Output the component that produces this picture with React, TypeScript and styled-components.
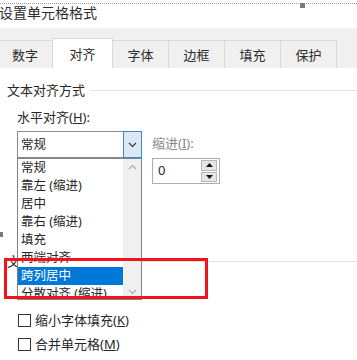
import React from 'react';
import styled, { createGlobalStyle } from 'styled-components';

const GlobalStyle = createGlobalStyle`
  html, body {
    margin: 0;
    padding: 0;
    background: #ffffff;
  }
  body {
    font-family: 'Noto Sans', 'Noto Sans CJK SC', sans-serif;
    color: #262626;
  }
  * {
    box-sizing: border-box;
  }
`;

const Page = styled.div`
  position: relative;
  width: 357px;
  height: 360px;
  overflow: hidden;
  background: #ffffff;
  padding-top: 3px;
`;

const TitleBar = styled.div`
  position: relative;
  height: 25px;
  border-top: 1px dotted #9a9a9a;
  padding-top: 1px;
  font-size: 14px;
  line-height: 16px;
  color: #2d2d2d;
  white-space: nowrap;
`;

const TitleText = styled.span`
  margin-left: -1px;
`;

const Handle = styled.div<{ top: number; left: number }>`
  position: absolute;
  top: ${(p) => p.top}px;
  left: ${(p) => p.left}px;
  width: 5px;
  height: 5px;
  background: #7a7a7a;
`;

const TabStrip = styled.div`
  display: flex;
  align-items: flex-end;
  height: 40px;
  background: #f0f0f0;
`;

const Tab = styled.div<{ $active?: boolean; $first?: boolean }>`
  position: relative;
  z-index: ${(p) => (p.$active ? 1 : 0)};
  display: flex;
  align-items: center;
  justify-content: center;
  width: ${(p) => (p.$active ? 61 : p.$first ? 56 : 57)}px;
  height: ${(p) => (p.$active ? 30 : 28)}px;
  margin-left: ${(p) => (p.$first ? -3 : -1)}px;
  padding-top: ${(p) => (p.$active ? 0 : 1)}px;
  border: 1px solid #d9d9d9;
  border-bottom: none;
  background: ${(p) => (p.$active ? '#ffffff' : '#f0f0f0')};
  font-size: 13px;
  line-height: 16px;
  color: #2b2b2b;
`;

const Content = styled.div`
  padding-left: 7px;
  background: #ffffff;
`;

const SectionHeader = styled.div<{ $gap: number }>`
  display: flex;
  align-items: center;
  gap: 5px;
  height: 16px;
  margin-top: ${(p) => p.$gap}px;
  font-size: 13px;
  line-height: 16px;
  white-space: nowrap;
`;

const Rule = styled.div`
  flex: 1;
  height: 1px;
  background: #e3e3e3;
`;

const Block = styled.div`
  padding-left: 10px;
`;

const FieldLabel = styled.div`
  margin-top: 11px;
  height: 16px;
  font-size: 13px;
  line-height: 16px;
`;

const FieldRow = styled.div`
  display: flex;
  gap: 10px;
  margin-top: 6px;
`;

const ComboWrap = styled.div`
  position: relative;
  width: 125px;
  height: 27px;
`;

const ComboBox = styled.div`
  display: flex;
  height: 100%;
  border: 1px solid #8a8a8a;
  background: #ffffff;
`;

const ComboValue = styled.div`
  flex: 1;
  padding-left: 3px;
  font-size: 12.5px;
  line-height: 25px;
`;

const ArrowButton = styled.div`
  display: flex;
  align-items: center;
  justify-content: center;
  width: 19px;
  margin: -1px -1px -1px 0;
  border: 1px solid #3a87d6;
  background: #dbe9f7;
`;

const DropList = styled.div`
  position: absolute;
  top: 27px;
  left: 0;
  z-index: 3;
  display: flex;
  width: 125px;
  height: 142px;
  border: 1px solid #828282;
  background: #ffffff;
  overflow: hidden;
`;

const Items = styled.div`
  flex: 1;
`;

const Item = styled.div<{ $selected?: boolean }>`
  height: 18px;
  padding-left: 3px;
  font-size: 12.5px;
  line-height: 18px;
  white-space: nowrap;
  background: ${(p) => (p.$selected ? '#0078d7' : 'transparent')};
  color: ${(p) => (p.$selected ? '#ffffff' : '#262626')};
`;

const ScrollTrack = styled.div`
  display: flex;
  flex-direction: column;
  align-items: center;
  justify-content: space-between;
  width: 18px;
  padding: 5px 0 4px;
  background: #f0f0f0;
`;

const IndentColumn = styled.div`
  padding-top: 4px;
`;

const IndentLabel = styled.div`
  height: 16px;
  font-size: 13px;
  line-height: 16px;
  color: #8a8a8a;
  white-space: nowrap;
`;

const SpinBox = styled.div`
  display: flex;
  width: 68px;
  height: 26px;
  margin-top: 7px;
  border: 1px solid #adadad;
  background: #ffffff;
`;

const SpinValue = styled.div`
  flex: 1;
  padding-left: 5px;
  font-size: 13px;
  line-height: 23px;
`;

const SpinButtons = styled.div`
  display: flex;
  flex-direction: column;
  gap: 1px;
  margin: 1px 2px 1px 0;
`;

const SpinButton = styled.div`
  display: flex;
  align-items: center;
  justify-content: center;
  flex: 1;
  width: 16px;
  border: 1px solid #b9b9b9;
  background: #e6e6e6;
`;

const CheckGroup = styled.div`
  margin-top: 39px;
`;

const CheckRow = styled.div`
  display: flex;
  align-items: center;
  gap: 4px;
  height: 24px;
  padding-left: 1px;
  font-size: 13px;
  line-height: 16px;
  white-space: nowrap;
`;

const CheckBox = styled.div`
  width: 13px;
  height: 13px;
  border: 1px solid #333333;
  background: #ffffff;
`;

const Annotation = styled.div`
  position: absolute;
  left: 4px;
  top: 258px;
  z-index: 5;
  width: 204px;
  height: 41px;
  border: 3px solid #f2141c;
`;

function Chevron({ up, color }: { up?: boolean; color: string }) {
  return (
    <svg width="9" height="6" viewBox="0 0 9 6">
      <path
        d={up ? 'M1 5 L4.5 1.5 L8 5' : 'M1 1 L4.5 4.5 L8 1'}
        fill="none"
        stroke={color}
        strokeWidth="1.1"
      />
    </svg>
  );
}

function Triangle({ up }: { up?: boolean }) {
  return (
    <svg width="7" height="4" viewBox="0 0 7 4">
      <path d={up ? 'M0 4 L3.5 0 L7 4 Z' : 'M0 0 L3.5 4 L7 0 Z'} fill="#111" />
    </svg>
  );
}

const TABS = ['数字', '对齐', '字体', '边框', '填充', '保护'];

const OPTIONS = ['常规', '靠左 (缩进)', '居中', '靠右 (缩进)', '填充', '两端对齐', '跨列居中', '分散对齐 (缩进)'];

export default function App() {
  return (
    <>
      <GlobalStyle />
      <Page>
        <TitleBar>
          <Handle top={-1} left={300} />
          <TitleText>设置单元格格式</TitleText>
        </TitleBar>

        <TabStrip>
          {TABS.map((t, i) => (
            <Tab key={t} $first={i === 0} $active={i === 1}>
              {t}
            </Tab>
          ))}
        </TabStrip>

        <Content>
          <SectionHeader $gap={14}>
            文本对齐方式
            <Rule />
          </SectionHeader>
          <Block>
            <FieldLabel>
              水平对齐(<u>H</u>):
            </FieldLabel>
            <FieldRow>
              <ComboWrap>
                <ComboBox>
                  <ComboValue>常规</ComboValue>
                  <ArrowButton>
                    <Chevron color="#333" />
                  </ArrowButton>
                </ComboBox>
                <DropList>
                  <Items>
                    {OPTIONS.map((o) => (
                      <Item key={o} $selected={o === '跨列居中'}>
                        {o}
                      </Item>
                    ))}
                  </Items>
                  <ScrollTrack>
                    <Chevron up color="#a8a8a8" />
                    <Chevron color="#a8a8a8" />
                  </ScrollTrack>
                </DropList>
              </ComboWrap>
              <IndentColumn>
                <IndentLabel>
                  缩进(<u>I</u>):
                </IndentLabel>
                <SpinBox>
                  <SpinValue>0</SpinValue>
                  <SpinButtons>
                    <SpinButton>
                      <Triangle up />
                    </SpinButton>
                    <SpinButton>
                      <Triangle />
                    </SpinButton>
                  </SpinButtons>
                </SpinBox>
              </IndentColumn>
            </FieldRow>
          </Block>

          <SectionHeader $gap={69}>
            文本控制
            <Rule />
          </SectionHeader>
          <Block>
            <CheckGroup>
              <CheckRow>
                <CheckBox />
                <span>
                  缩小字体填充(<u>K</u>)
                </span>
              </CheckRow>
              <CheckRow>
                <CheckBox />
                <span>
                  合并单元格(<u>M</u>)
                </span>
              </CheckRow>
            </CheckGroup>
          </Block>
        </Content>

        <Handle top={232} left={-2} />
        <Annotation />
      </Page>
    </>
  );
}
